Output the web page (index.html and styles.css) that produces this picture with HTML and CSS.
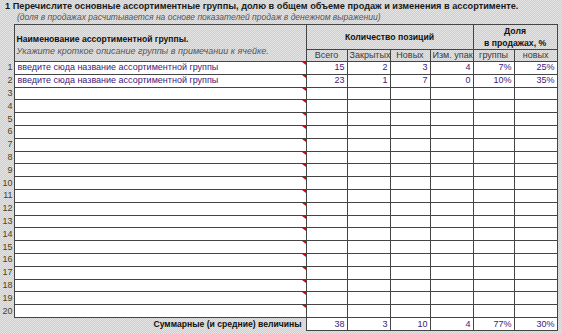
FILE: index.html
```html
<!DOCTYPE html>
<html lang="ru">
<head>
<meta charset="utf-8">
<title>Ассортиментные группы</title>
<link rel="stylesheet" href="styles.css">
</head>
<body>
<div class="page">
  <div class="title">1 Перечислите основные ассортиментные группы, долю в общем объеме продаж и изменения в ассортименте.</div>
  <div class="subtitle">(доля в продажах расчитывается на основе показателей продаж в денежном выражении)</div>
  <table class="grid">
    <colgroup>
      <col class="c-num">
      <col class="c-name">
      <col class="c-a">
      <col class="c-b">
      <col class="c-c">
      <col class="c-d">
      <col class="c-e">
      <col class="c-f">
    </colgroup>
    <thead>
      <tr class="h1">
        <th class="num"></th>
        <th class="hname" rowspan="2"><div class="hname-b">Наименование ассортиментной группы.</div><div class="hname-i">Укажите кроткое описание группы в примечании к ячейке.</div></th>
        <th class="hgrp" colspan="4">Количество позиций</th>
        <th class="hgrp hshare" colspan="2">Доля<br>в продажах, %</th>
      </tr>
      <tr class="h2">
        <th class="num"></th>
        <th class="hsub">Всего</th>
        <th class="hsub">Закрытых</th>
        <th class="hsub">Новых</th>
        <th class="hsub">Изм. упак</th>
        <th class="hsub">группы</th>
        <th class="hsub">новых</th>
      </tr>
    </thead>
    <tbody>
      <tr class="row"><td class="num">1</td><td class="name">введите сюда название ассортиментной группы<i class="note"></i></td><td class="val">15</td><td class="val">2</td><td class="val">3</td><td class="val">4</td><td class="val">7%</td><td class="val">25%</td></tr>
      <tr class="row"><td class="num">2</td><td class="name">введите сюда название ассортиментной группы<i class="note"></i></td><td class="val">23</td><td class="val">1</td><td class="val">7</td><td class="val">0</td><td class="val">10%</td><td class="val">35%</td></tr>
      <tr class="row"><td class="num">3</td><td class="name"><i class="note"></i></td><td class="val"></td><td class="val"></td><td class="val"></td><td class="val"></td><td class="val"></td><td class="val"></td></tr>
      <tr class="row"><td class="num">4</td><td class="name"><i class="note"></i></td><td class="val"></td><td class="val"></td><td class="val"></td><td class="val"></td><td class="val"></td><td class="val"></td></tr>
      <tr class="row"><td class="num">5</td><td class="name"><i class="note"></i></td><td class="val"></td><td class="val"></td><td class="val"></td><td class="val"></td><td class="val"></td><td class="val"></td></tr>
      <tr class="row"><td class="num">6</td><td class="name"><i class="note"></i></td><td class="val"></td><td class="val"></td><td class="val"></td><td class="val"></td><td class="val"></td><td class="val"></td></tr>
      <tr class="row"><td class="num">7</td><td class="name"><i class="note"></i></td><td class="val"></td><td class="val"></td><td class="val"></td><td class="val"></td><td class="val"></td><td class="val"></td></tr>
      <tr class="row"><td class="num">8</td><td class="name"><i class="note"></i></td><td class="val"></td><td class="val"></td><td class="val"></td><td class="val"></td><td class="val"></td><td class="val"></td></tr>
      <tr class="row"><td class="num">9</td><td class="name"><i class="note"></i></td><td class="val"></td><td class="val"></td><td class="val"></td><td class="val"></td><td class="val"></td><td class="val"></td></tr>
      <tr class="row"><td class="num">10</td><td class="name"><i class="note"></i></td><td class="val"></td><td class="val"></td><td class="val"></td><td class="val"></td><td class="val"></td><td class="val"></td></tr>
      <tr class="row"><td class="num">11</td><td class="name"><i class="note"></i></td><td class="val"></td><td class="val"></td><td class="val"></td><td class="val"></td><td class="val"></td><td class="val"></td></tr>
      <tr class="row"><td class="num">12</td><td class="name"><i class="note"></i></td><td class="val"></td><td class="val"></td><td class="val"></td><td class="val"></td><td class="val"></td><td class="val"></td></tr>
      <tr class="row"><td class="num">13</td><td class="name"><i class="note"></i></td><td class="val"></td><td class="val"></td><td class="val"></td><td class="val"></td><td class="val"></td><td class="val"></td></tr>
      <tr class="row"><td class="num">14</td><td class="name"><i class="note"></i></td><td class="val"></td><td class="val"></td><td class="val"></td><td class="val"></td><td class="val"></td><td class="val"></td></tr>
      <tr class="row"><td class="num">15</td><td class="name"><i class="note"></i></td><td class="val"></td><td class="val"></td><td class="val"></td><td class="val"></td><td class="val"></td><td class="val"></td></tr>
      <tr class="row"><td class="num">16</td><td class="name"><i class="note"></i></td><td class="val"></td><td class="val"></td><td class="val"></td><td class="val"></td><td class="val"></td><td class="val"></td></tr>
      <tr class="row"><td class="num">17</td><td class="name"><i class="note"></i></td><td class="val"></td><td class="val"></td><td class="val"></td><td class="val"></td><td class="val"></td><td class="val"></td></tr>
      <tr class="row"><td class="num">18</td><td class="name"><i class="note"></i></td><td class="val"></td><td class="val"></td><td class="val"></td><td class="val"></td><td class="val"></td><td class="val"></td></tr>
      <tr class="row"><td class="num">19</td><td class="name"><i class="note"></i></td><td class="val"></td><td class="val"></td><td class="val"></td><td class="val"></td><td class="val"></td><td class="val"></td></tr>
      <tr class="row"><td class="num">20</td><td class="name"><i class="note"></i></td><td class="val"></td><td class="val"></td><td class="val"></td><td class="val"></td><td class="val"></td><td class="val"></td></tr>
    </tbody>
    <tfoot>
      <tr class="sum"><td class="num"></td><td class="sumlabel">Суммарные (и средние) величины</td><td class="val">38</td><td class="val">3</td><td class="val">10</td><td class="val">4</td><td class="val">77%</td><td class="val">30%</td></tr>
    </tfoot>
  </table>
</div>
</body>
</html>
```
FILE: styles.css
```css
html, body {
  margin: 0;
  padding: 0;
}
body {
  width: 562px;
  height: 334px;
  overflow: hidden;
  background: repeating-conic-gradient(#cecece 0 25%, #e4e4e4 0 50%) 0 0 / 2px 2px;
  font-family: "Liberation Sans", Arial, sans-serif;
  font-size: 9px;
  color: #111;
}
.page {
  padding-top: 1px;
}
.title {
  font-weight: bold;
  font-size: 9.2px;
  line-height: 11px;
  padding-left: 5px;
  color: #1a1a1a;
  white-space: nowrap;
}
.subtitle {
  font-style: italic;
  font-size: 8.5px;
  line-height: 11px;
  padding-left: 17px;
  color: #555;
  white-space: nowrap;
}
.grid {
  margin-top: 1px;
  border-collapse: collapse;
  table-layout: fixed;
  width: 557px;
}
.c-num { width: 14px; }
.c-name { width: 292px; }
.c-a { width: 41px; }
.c-b { width: 43px; }
.c-c { width: 40px; }
.c-d { width: 43px; }
.c-e { width: 41px; }
.c-f { width: 43px; }

.grid th, .grid td {
  padding: 0 2px;
  overflow: hidden;
  white-space: nowrap;
}
.grid th {
  font-weight: normal;
}
.num {
  text-align: right;
  color: #4e4018;
  padding: 0 1px 0 0 !important;
  border: none;
}
.h1 { height: 25px; }
.h2 { height: 12px; }
.hname {
  border: 1px solid #444;
  text-align: left;
  vertical-align: bottom;
  padding: 0 3px 4px 2px !important;
}
.hname-b {
  font-weight: bold;
  font-size: 8.6px;
  line-height: 12px;
  color: #111;
}
.hname-i {
  font-style: italic;
  line-height: 12px;
  color: #555;
}
.hgrp {
  border: 1px solid #444;
  font-weight: bold !important;
  font-size: 8.7px;
  text-align: center;
  line-height: 12px;
  color: #111;
}
.hsub {
  border: 1px solid #444;
  text-align: center;
  line-height: 11px;
  color: #3a3a3a;
}
.row {
  height: 12.8px;
}
.row td {
  line-height: 11px;
}
.name {
  position: relative;
  background: #fff;
  border: 1px solid #444;
  color: #40207a;
  padding-left: 3px !important;
}
.note {
  position: absolute;
  top: 0;
  right: 0;
  width: 0;
  height: 0;
  border-top: 3px solid #e00000;
  border-left: 4px solid transparent;
}
.val {
  background: #fff;
  border: 1px solid #444;
  text-align: right;
  color: #40207a;
}
.sum { height: 13px; }
.sumlabel {
  border: none;
  text-align: right;
  font-weight: bold;
  font-size: 8.6px;
  color: #111;
  padding-right: 4px !important;
}
```
